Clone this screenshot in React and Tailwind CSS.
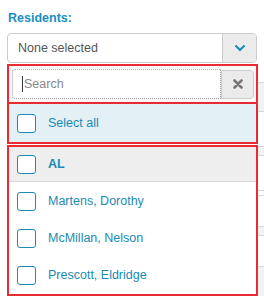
import React from "react";

function Box() {
  return <span className="block w-[19px] h-[19px] shrink-0 rounded-[3px] border-[1.5px] border-[#1a8bb5] bg-white" />;
}

export default function App() {
  const people = [
    ["Martens, Dorothy", "h-[38px]"],
    ["McMillan, Nelson", "h-[37px]"],
    ["Prescott, Eldridge", "h-[37px]"],
  ];
  return (
    <div className="relative w-[264px] h-[296px] overflow-hidden bg-white" style={{ fontFamily: '"Liberation Sans", Arial, sans-serif' }}>
      <div className="pl-[8px] pt-[10px] text-[12.5px] font-bold leading-[16px] text-[#1b8ebd]">Residents:</div>
      <div className="mx-[7px] mt-[7px] flex h-[30px] w-[250px] overflow-hidden rounded-[4px] border border-[#cccccc]">
        <div className="flex flex-1 items-center pl-[10px] text-[12.5px] text-[#555555]">None selected</div>
        <div className="flex w-[34px] items-center justify-center border-l border-[#cccccc] bg-[#ebebeb]">
          <svg width="12" height="8" viewBox="0 0 12 8"><path d="M1.5 1.5 L6 6 L10.5 1.5" fill="none" stroke="#1a8bb5" strokeWidth="2" /></svg>
        </div>
      </div>
      {/* background content peeking at right */}
      <div className="absolute left-[250px] top-[82px] flex w-[14px] flex-col">
        <div className="h-[30px] border-y border-[#d6d6d6] bg-[#f2f2f2]" />
        <div className="mt-[34px] h-[10px] border-y border-[#d6d6d6] bg-[#f2f2f2]" />
        <div className="mt-[34px] h-[6px] border-y border-[#d6d6d6]" />
        <div className="mt-[30px] h-[10px] border-y border-[#d6d6d6] bg-[#f2f2f2]" />
        <div className="mt-[30px] h-[34px] border-y border-[#d6d6d6] bg-[#f2f2f2]" />
      </div>
      <div className="absolute left-[7px] top-[64px] w-[251px]">
        <div className="flex h-[40px] items-center border-2 border-[#e8141c]/90 bg-[#f7f7f7] pl-[3px] pr-[2px]">
          <div className="flex h-[30px] flex-1 items-center rounded-l-[3px] border border-dotted border-[#999] border-t-[#bbb] bg-white pl-[9px] text-[12.5px] text-[#888]">
            <span className="mr-[1px] inline-block h-[16px] w-[1px] bg-[#333]" />Search
          </div>
          <div className="flex h-[29px] w-[33px] items-center justify-center rounded-r-[4px] border border-[#cccccc] bg-[#ebebeb]">
            <svg width="10" height="10" viewBox="0 0 10 10"><path d="M1.5 1.5 L8.5 8.5 M8.5 1.5 L1.5 8.5" stroke="#777" strokeWidth="2.6" strokeLinecap="round" /></svg>
          </div>
        </div>
        <div className="-mt-[2px] flex h-[42px] items-center gap-[12px] border-2 border-[#e8141c]/90 bg-[#e3f0f6] pl-[8px] text-[12.5px] text-[#1a8bb5]">
          <Box />Select all
        </div>
        <div className="mt-[1px] flex h-[151px] flex-col border-2 border-[#e8141c]/90 bg-white">
          <div className="flex h-[35px] shrink-0 items-center gap-[12px] border-b border-[#d8d8d8] bg-[#eeeeee] pl-[8px] text-[12.5px] font-bold text-[#1a8bb5]">
            <Box />AL
          </div>
          {people.map(([p, h]) => (
            <div key={p} className={"flex shrink-0 items-center gap-[12px] pl-[8px] text-[12.5px] text-[#1a8bb5] " + h}>
              <Box />{p}
            </div>
          ))}
        </div>
      </div>
    </div>
  );
}
